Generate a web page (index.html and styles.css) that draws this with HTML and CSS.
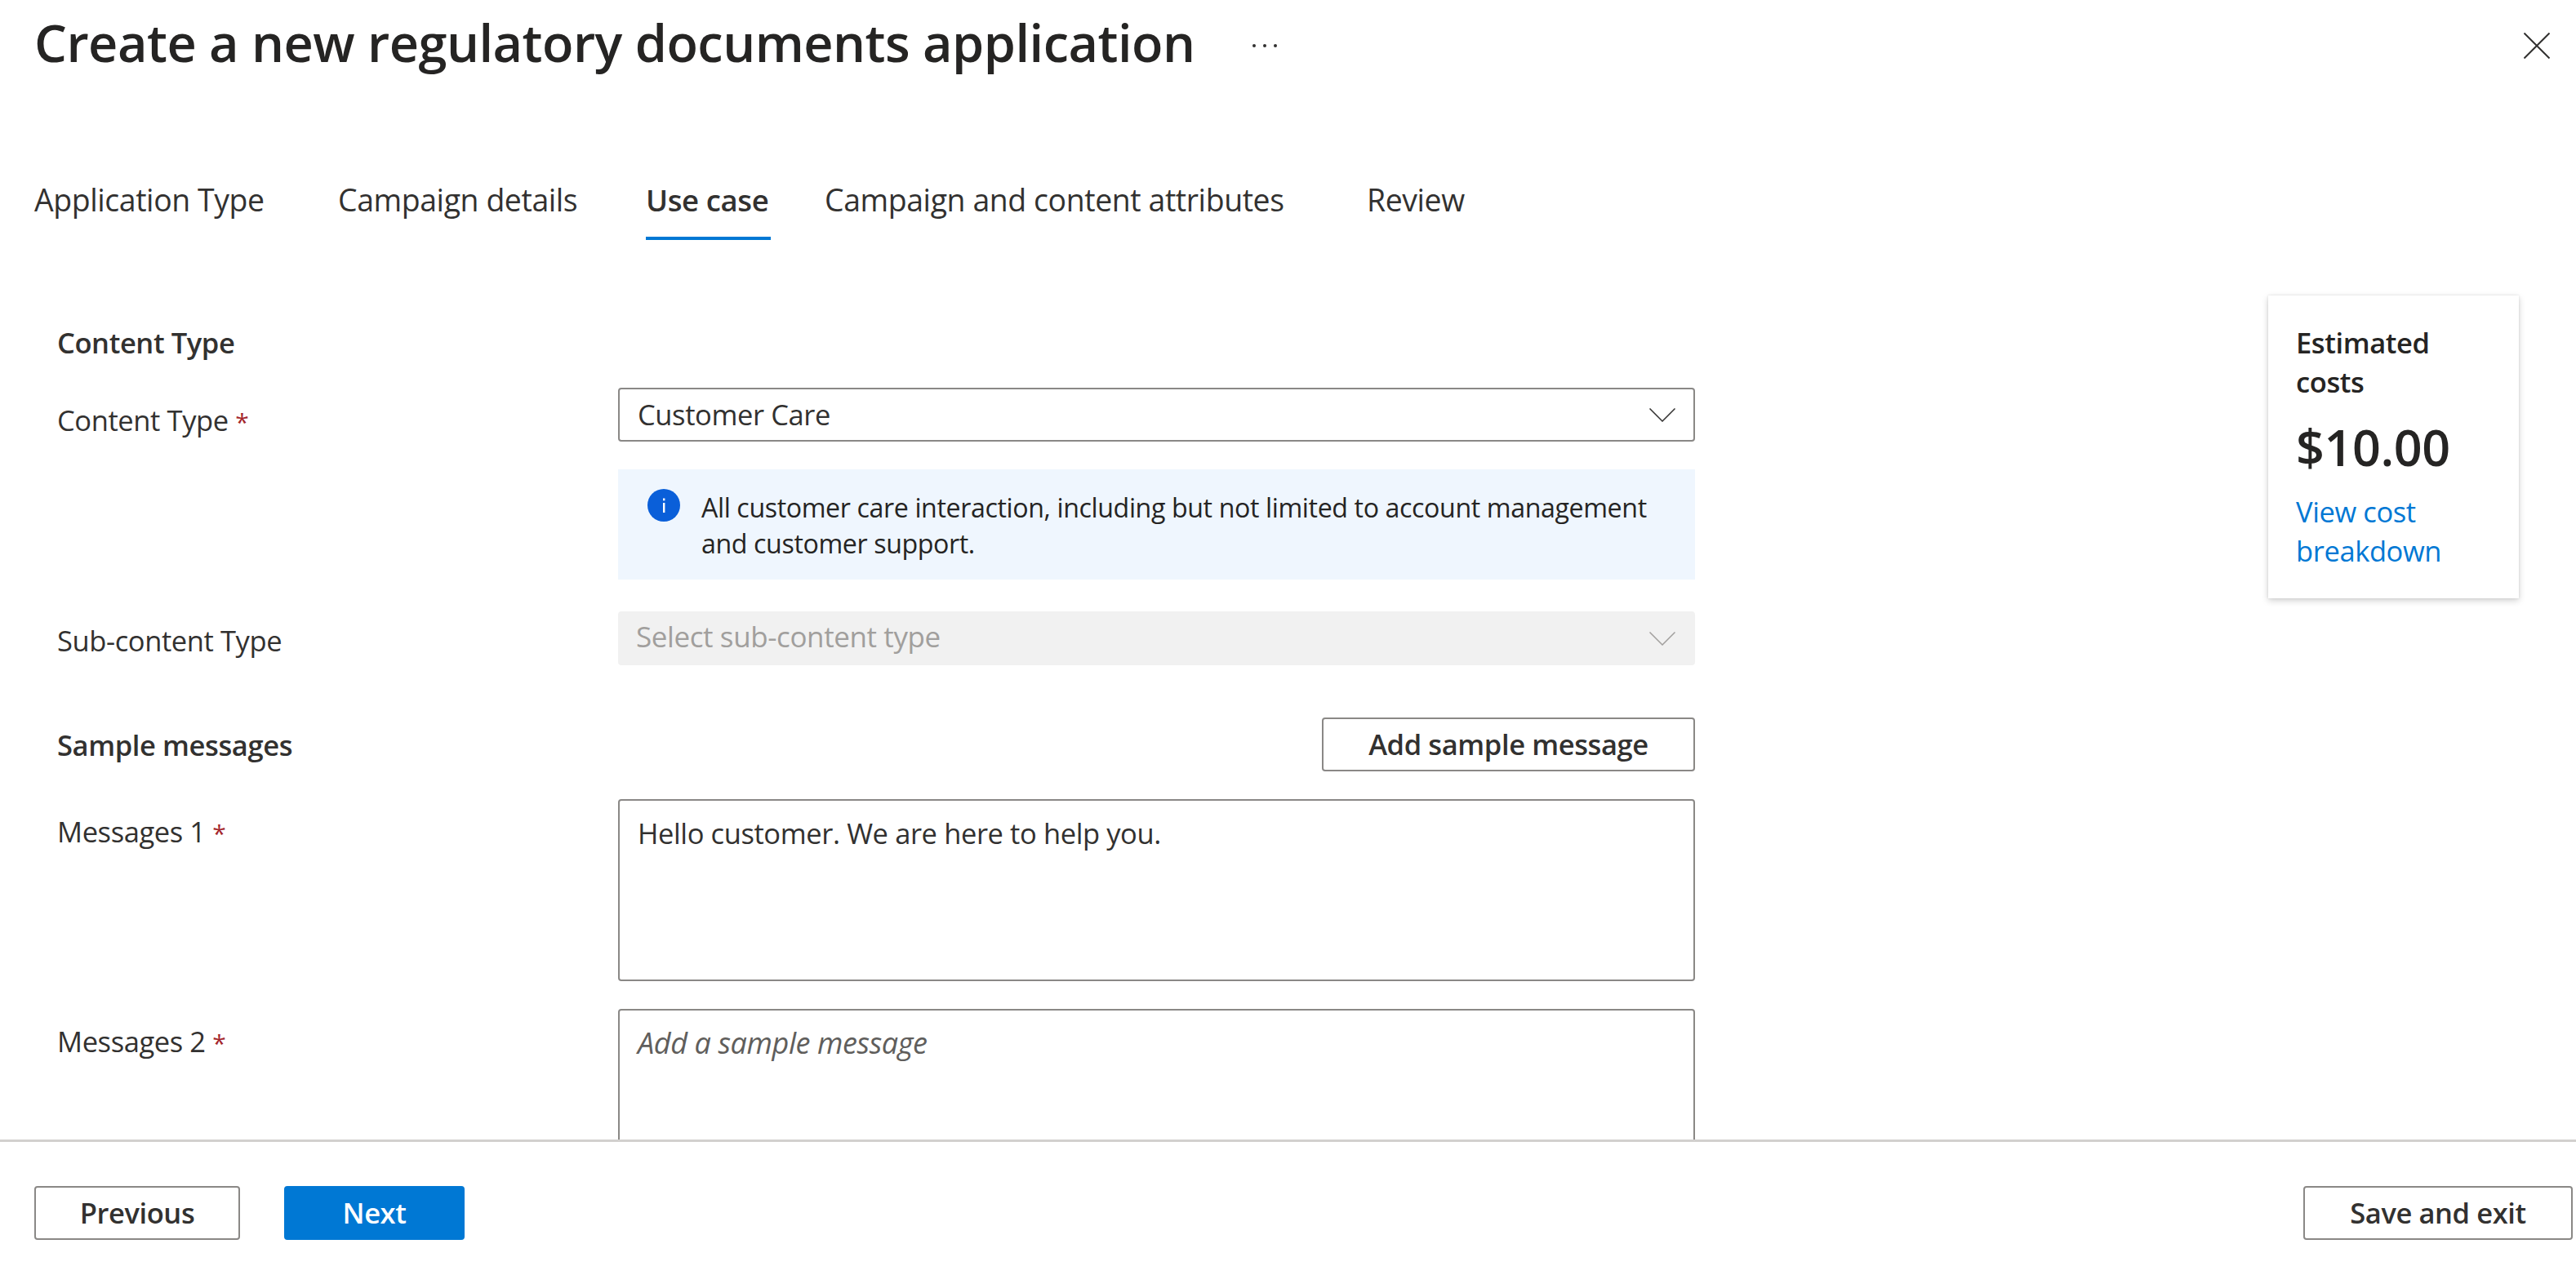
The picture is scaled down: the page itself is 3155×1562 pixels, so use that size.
FILE: index.html
```html
<!DOCTYPE html>
<html lang="en">
<head>
    <title>Create a new regulatory documents application</title>
    <link rel="stylesheet" href="styles.css">
</head>
<body>
<div class="page">
    <header class="header">
        <h1 class="title">Create a new regulatory documents application</h1>
        <svg class="more" viewBox="0 0 32 6" aria-hidden="true">
            <circle cx="3" cy="3" r="2"></circle>
            <circle cx="16" cy="3" r="2"></circle>
            <circle cx="29" cy="3" r="2"></circle>
        </svg>
        <svg class="close" viewBox="0 0 32 32" aria-hidden="true">
            <path d="M0.5 0.5 31.5 31.5M31.5 0.5 0.5 31.5"></path>
        </svg>
    </header>

    <nav class="tabs">
        <a class="tab tab-type">Application Type</a>
        <a class="tab tab-details">Campaign details</a>
        <a class="tab tab-use active">Use case</a>
        <a class="tab tab-attrs">Campaign and content attributes</a>
        <a class="tab tab-review">Review</a>
    </nav>

    <main class="content">
        <form class="form">
            <h2 class="section">Content Type</h2>

            <div class="row row-type">
                <label class="label">Content Type <span class="req">*</span></label>
                <div>
                    <div class="select">
                        <span>Customer Care</span>
                        <svg class="chevron" viewBox="0 0 32 17" aria-hidden="true"><path d="M0.5 0.5 16 16 31.5 0.5"></path></svg>
                    </div>
                    <div class="info">
                        <svg class="info-icon" viewBox="0 0 40 40" aria-hidden="true">
                            <circle cx="20" cy="20" r="20"></circle>
                            <rect x="19" y="17" width="2.4" height="12"></rect>
                            <rect x="19" y="11.5" width="2.4" height="2.8"></rect>
                        </svg>
                        <p class="info-text">All customer care interaction, including but not limited to account management and customer support.</p>
                    </div>
                </div>
            </div>

            <div class="row row-sub">
                <label class="label label-sub">Sub-content Type</label>
                <div class="select disabled">
                    <span>Select sub-content type</span>
                    <svg class="chevron" viewBox="0 0 32 17" aria-hidden="true"><path d="M0.5 0.5 16 16 31.5 0.5"></path></svg>
                </div>
            </div>

            <div class="row row-sample">
                <h2 class="section section-sample">Sample messages</h2>
                <button type="button" class="btn btn-add">Add sample message</button>
            </div>

            <div class="row row-msg">
                <label class="label">Messages 1 <span class="req">*</span></label>
                <div class="textbox">Hello customer. We are here to help you.</div>
            </div>

            <div class="row row-msg">
                <label class="label">Messages 2 <span class="req">*</span></label>
                <div class="textbox placeholder">Add a sample message</div>
            </div>
        </form>

        <aside class="cost">
            <h3 class="cost-title">Estimated costs</h3>
            <div class="cost-value">$10.00</div>
            <a class="cost-link">View cost breakdown</a>
        </aside>
    </main>

    <footer class="footer">
        <button type="button" class="btn btn-prev">Previous</button>
        <button type="button" class="btn btn-next">Next</button>
        <button type="button" class="btn btn-save">Save and exit</button>
    </footer>
</div>
</body>
</html>
```

FILE: styles.css
```css
* {
  box-sizing: border-box;
}
body {
  margin: 0;
  background: #fff;
  color: #323130;
  font-family: "Open Sans", "Noto Sans", Arial, sans-serif;
  font-size: 34.5px;
  line-height: 48px;
  letter-spacing: -0.4px;
}
.page {
  display: flex;
  flex-direction: column;
  height: 100vh;
  overflow: hidden;
}

/* header */
.header {
  display: flex;
  align-items: center;
  flex: none;
  height: 112px;
  padding: 0 32px 0 42px;
}
.title {
  margin: 0 0 8px;
  color: #252423;
  font-size: 63px;
  font-weight: 600;
  line-height: 84px;
  letter-spacing: -0.5px;
}
.more {
  width: 32px;
  height: 6px;
  margin-left: 70px;
  fill: #323130;
}
.close {
  width: 32px;
  height: 32px;
  margin-left: auto;
  fill: none;
  stroke: #323130;
  stroke-width: 2;
}

/* tabs */
.tabs {
  display: flex;
  flex: none;
  margin-top: 88px;
  padding-left: 42px;
}
.tab {
  padding: 21px 0;
  border-bottom: 4px solid transparent;
  color: #323130;
  font-size: 37.4px;
  white-space: nowrap;
}
.tab-type {
  width: 372px;
}
.tab-details {
  width: 377px;
}
.tab-use {
  width: 153px;
  font-size: 36.5px;
}
.tab-attrs {
  width: 664px;
  margin-left: 66px;
}
.active {
  border-bottom-color: #0078d4;
  font-weight: 600;
}

/* form */
.content {
  display: flex;
  flex: 1;
  min-height: 0;
  overflow: hidden;
}
.form {
  flex: none;
  width: 2006px;
  margin: 102px 0 0 70px;
}
.section {
  margin: 0;
  color: #323130;
  font-size: 34.5px;
  font-weight: 600;
  line-height: 48px;
}
.section-sample {
  padding-top: 10px;
}
.row {
  display: grid;
  grid-template-columns: 687px 1319px;
}
.row-type {
  margin-top: 31px;
}
.row-sub {
  margin-top: 39px;
}
.row-sample {
  margin-top: 64px;
}
.row-msg {
  margin-top: 34px;
}
.label {
  padding-top: 16px;
  color: #323130;
}
.label-sub {
  padding-top: 12px;
}
.req {
  color: #a4262c;
  font-size: 30px;
}
.select {
  display: flex;
  align-items: center;
  justify-content: space-between;
  height: 66px;
  padding: 0 22px;
  border: 2px solid #8a8886;
  border-radius: 4px;
}
.select.disabled {
  padding-bottom: 4px;
  padding-left: 20px;
  border-color: #f1f1f1;
  background: #f1f1f1;
  color: #a19f9d;
  font-size: 35px;
}
.chevron {
  width: 32px;
  height: 17px;
  fill: none;
  stroke: #323130;
  stroke-width: 1.5;
}
.disabled .chevron {
  margin-top: 4px;
  stroke: #a19f9d;
}
.info {
  display: flex;
  height: 135px;
  margin-top: 34px;
  padding: 25px 30px 0 36px;
  background: #eff6fe;
}
.info-icon {
  flex: none;
  width: 40px;
  height: 40px;
  margin: -1px 26px 0 0;
  fill: #0a5fd9;
}
.info-icon rect {
  fill: #fff;
}
.info-text {
  margin: 0;
  font-size: 32.2px;
  line-height: 44px;
  color: #252423;
}
.textbox {
  height: 223px;
  padding: 16px 22px;
  border: 2px solid #8a8886;
  border-radius: 4px;
}
.placeholder {
  color: #605e5c;
  font-size: 36px;
  font-style: italic;
}

/* buttons */
.btn {
  height: 66px;
  border: 2px solid #8a8886;
  border-radius: 4px;
  background: #fff;
  color: #323130;
  font: inherit;
  font-weight: 600;
  letter-spacing: inherit;
}
.btn-add {
  justify-self: end;
  width: 457px;
}
.btn-prev {
  width: 252px;
}
.btn-next {
  width: 221px;
  margin-left: 54px;
  border-color: #0078d4;
  background: #0078d4;
  color: #fff;
}
.btn-save {
  width: 330px;
  margin-left: auto;
}

/* cost card */
.cost {
  flex: none;
  align-self: flex-start;
  width: 307px;
  height: 371px;
  margin: 68px 0 0 702px;
  padding: 34px 34px;
  background: #fff;
  box-shadow: 0 3px 8px rgba(0, 0, 0, 0.18), 0 0 3px rgba(0, 0, 0, 0.1);
}
.cost-title {
  margin: 0;
  color: #252423;
  font-size: 34.5px;
  font-weight: 600;
  line-height: 48px;
}
.cost-value {
  margin-top: 18px;
  color: #252423;
  font-size: 61px;
  font-weight: 600;
  line-height: 76px;
}
.cost-link {
  display: block;
  margin-top: 17px;
  color: #0078d4;
}

/* footer */
.footer {
  display: flex;
  flex: none;
  height: 166px;
  padding: 54px 4px 0 42px;
  border-top: 3px solid #d2d0ce;
  background: #fff;
}
```
